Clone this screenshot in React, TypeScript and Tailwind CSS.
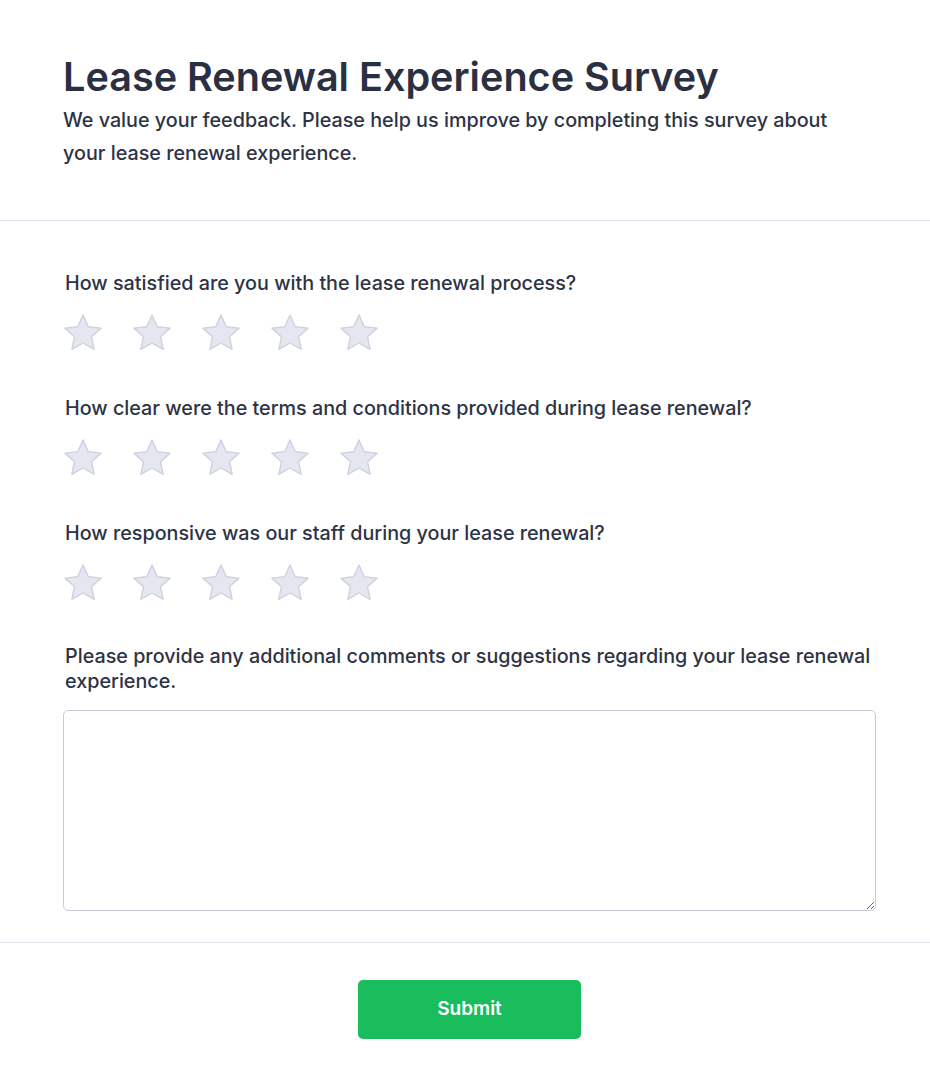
import React, { useState } from 'react';

const questions = [
  'How satisfied are you with the lease renewal process?',
  'How clear were the terms and conditions provided during lease renewal?',
  'How responsive was our staff during your lease renewal?',
];

const Star: React.FC<{ active: boolean; onClick: () => void }> = ({ active, onClick }) => (
  <button type="button" onClick={onClick} className="block w-[40px] h-[40px]">
    <svg viewBox="-1 -1 40 40" className="w-[40px] h-[40px]">
      <polygon
        points="19,1 24.29,12.72 37.07,14.13 27.56,22.78 30.17,35.37 19,29 7.83,35.37 10.44,22.78 0.93,14.13 13.71,12.72"
        fill={active ? '#facc15' : '#e4e7ef'}
        stroke={active ? '#eab308' : '#cdd2de'}
        strokeWidth="1.4"
        strokeLinejoin="round"
      />
    </svg>
  </button>
);

const App: React.FC = () => {
  const [ratings, setRatings] = useState<number[]>([0, 0, 0]);
  const [comment, setComment] = useState('');

  const setRating = (q: number, v: number) => {
    setRatings(r => r.map((x, i) => (i === q ? v : x)));
  };

  return (
    <div className="min-h-screen bg-white font-['Inter',sans-serif] text-[#2d3344]">
      <header className="pl-[63px] pr-[54px] pt-[51px] pb-[50px] border-b border-[#dcdfea]">
        <h1 className="text-[39.6px] leading-[53px] font-semibold text-[#2a3042]">
          Lease Renewal Experience Survey
        </h1>
        <p className="w-[790px] text-[19.75px] leading-[33px] font-medium text-[#2d3344]">
          We value your feedback. Please help us improve by completing this survey about your lease renewal experience.
        </p>
      </header>

      <main className="pl-[63px] pr-[54px] pt-[50px] pb-[31px] border-b border-[#e3e5ee]">
        <div className="flex flex-col gap-[43px]">
          {questions.map((q, qi) => (
            <div key={q} className="flex flex-col gap-[17px]">
              <label className="pl-[2px] text-[19.75px] leading-[25px] font-medium">{q}</label>
              <div className="flex gap-[29px]">
                {[1, 2, 3, 4, 5].map(v => (
                  <Star key={v} active={ratings[qi] >= v} onClick={() => setRating(qi, v)} />
                ))}
              </div>
            </div>
          ))}
          <div className="-mt-[2px] flex flex-col gap-[16px]">
            <label className="pl-[2px] text-[19.75px] leading-[25px] font-medium">
              Please provide any additional comments or suggestions regarding your lease renewal experience.
            </label>
            <textarea
              value={comment}
              onChange={e => setComment(e.target.value)}
              className="w-full h-[201px] rounded-[5px] border border-[#c9ccd8] p-3 text-base outline-none"
            />
          </div>
        </div>
      </main>

      <div className="pl-[63px] pr-[54px] pt-[37px] pb-[50px] flex justify-center">
        <button
          type="button"
          className="w-[223px] h-[59px] rounded-[5px] bg-[#19bd5b] text-white text-[19px] font-semibold"
        >
          Submit
        </button>
      </div>
    </div>
  );
};

export default App;
